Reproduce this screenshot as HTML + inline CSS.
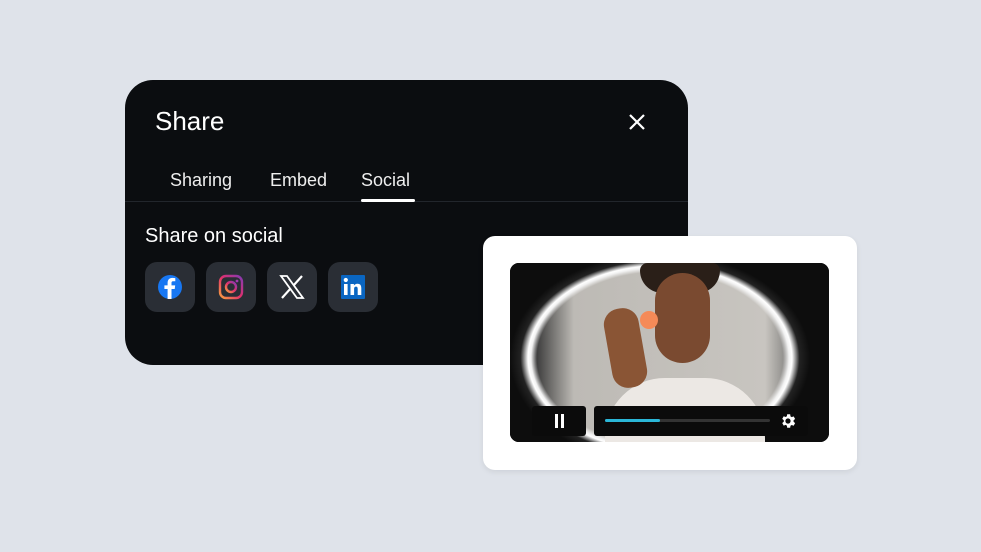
<!DOCTYPE html>
<html><head><style>
body{margin:0;width:981px;height:552px;background:#dfe3ea;position:relative;overflow:hidden;font-family:"Liberation Sans",sans-serif}
.card{position:absolute;left:125px;top:80px;width:563px;height:285px;background:#0b0d10;border-radius:28px;color:#fff}
.t{position:absolute;font-size:26px;left:30px;top:26px}
.tab{position:absolute;top:90px;font-size:18px;color:#eee}
.line{position:absolute;left:0;right:0;top:121px;height:1px;background:#22262c}
.ul{position:absolute;left:236px;top:119px;width:54px;height:3px;background:#fff;border-radius:2px}
.ic{position:absolute;top:182px;width:50px;height:50px;border-radius:12px;background:#2a2e35}
.vc{position:absolute;left:483px;top:236px;width:374px;height:234px;background:#fff;border-radius:12px;box-shadow:0 2px 6px rgba(0,0,0,.08)}
.vid{position:absolute;left:27px;top:27px;width:319px;height:179px;border-radius:9px;overflow:hidden;background:#1a1a1a}
</style></head><body>
<div class="card">
<div class="t">Share</div>
<svg style="position:absolute;left:503px;top:33px" width="18" height="18"><path d="M2 2L16 16M16 2L2 16" stroke="#fff" stroke-width="2.2"/></svg>
<div class="tab" style="left:45px">Sharing</div>
<div class="tab" style="left:145px">Embed</div>
<div class="tab" style="left:236px">Social</div>
<div class="line"></div><div class="ul"></div>
<div style="position:absolute;left:20px;top:145px;font-size:20px">Share on social</div>
<div class="ic" style="left:20px"><svg width="50" height="50"><circle cx="25" cy="25" r="12" fill="#1877f2"/><path d="M26.5 37V27h3.2l.5-3.6h-3.7v-2.3c0-1 .3-1.8 1.8-1.8h2v-3.2a25 25 0 0 0-2.9-.2c-2.9 0-4.8 1.8-4.8 5v2.5h-3.2V27h3.2v10z" fill="#fff"/></svg></div>
<div class="ic" style="left:81px"><svg width="50" height="50"><defs><linearGradient id="g" x1="0" y1="1" x2="1" y2="0"><stop offset="0" stop-color="#f9a03f"/><stop offset=".5" stop-color="#e1306c"/><stop offset="1" stop-color="#833ab4"/></linearGradient></defs><rect x="14" y="14" width="22" height="22" rx="6" fill="none" stroke="url(#g)" stroke-width="2.4"/><circle cx="25" cy="25" r="5" fill="none" stroke="url(#g)" stroke-width="2.4"/><circle cx="31" cy="19" r="1.4" fill="#a53ab0"/></svg></div>
<div class="ic" style="left:142px"><svg width="50" height="50"><path d="M14 14h6l16 22h-6z" fill="none" stroke="#fff" stroke-width="1.8"/><path d="M35 14L26.5 23.5M15 36l8.7-9.7" stroke="#fff" stroke-width="2.2"/></svg></div>
<div class="ic" style="left:203px"><svg width="50" height="50"><rect x="13" y="13" width="24" height="24" rx="1" fill="#0a66c2"/><rect x="16" y="22" width="3.6" height="11" fill="#fff"/><circle cx="17.8" cy="18" r="2.1" fill="#fff"/><path d="M22.5 22h3.4v1.6c.6-1 1.8-1.9 3.6-1.9 3 0 3.8 1.9 3.8 4.6V33h-3.6v-6c0-1.3-.3-2.4-1.7-2.4s-1.9 1-1.9 2.4v6h-3.6z" fill="#fff"/></svg></div>
</div>
<div class="vc"><div class="vid">
<div style="position:absolute;left:0;top:0;right:0;bottom:0;background:linear-gradient(90deg,#1a1a1a 0%,#3a3a3a 8%,#bdbab5 20%,#c8c5c0 80%,#5a5a5a 92%,#2a2a2a 100%)"></div>
<div style="position:absolute;left:0;top:0;right:0;bottom:0;background:radial-gradient(ellipse 150px 105px at 150px 95px,rgba(0,0,0,0) 0%,rgba(0,0,0,0) 82%,#f2f2f2 86%,#ffffff 88%,#222 93%,#0d0d0d 100%)"></div>
<div style="position:absolute;left:130px;top:0;width:80px;height:30px;border-radius:10px 10px 30px 30px;background:#2a1f18"></div>
<div style="position:absolute;left:145px;top:10px;width:55px;height:90px;border-radius:28px;background:#7a4a30"></div>
<div style="position:absolute;left:95px;top:115px;width:160px;height:80px;border-radius:60px 60px 0 0;background:#ece8e4"></div>
<div style="position:absolute;left:98px;top:45px;width:35px;height:80px;border-radius:16px;background:#8a5535;transform:rotate(-10deg)"></div>
<div style="position:absolute;left:130px;top:48px;width:18px;height:18px;border-radius:50%;background:#f58a58"></div>
<div style="position:absolute;left:22px;top:143px;width:54px;height:30px;border-radius:3px;background:#0b0b0b"></div>
<div style="position:absolute;left:45px;top:151px;width:3px;height:14px;background:#fff"></div>
<div style="position:absolute;left:51px;top:151px;width:3px;height:14px;background:#fff"></div>
<div style="position:absolute;left:84px;top:143px;width:214px;height:30px;border-radius:3px;background:#0b0b0b"></div>
<div style="position:absolute;left:95px;top:156px;width:165px;height:3px;background:#333;border-radius:2px"></div>
<div style="position:absolute;left:95px;top:156px;width:55px;height:3px;background:#2bb7d8;border-radius:2px"></div>
<svg style="position:absolute;left:269px;top:149px" width="18" height="18" viewBox="0 0 24 24"><path fill="#fff" d="M19.4 13a7.5 7.5 0 0 0 0-2l2.1-1.6-2-3.5-2.5 1a7 7 0 0 0-1.7-1L14.9 3h-4l-.4 2.7a7 7 0 0 0-1.7 1l-2.5-1-2 3.5L6.4 11a7.5 7.5 0 0 0 0 2l-2.1 1.6 2 3.5 2.5-1a7 7 0 0 0 1.7 1l.4 2.9h4l.4-2.7a7 7 0 0 0 1.7-1l2.5 1 2-3.5zM12 15.5a3.5 3.5 0 1 1 0-7 3.5 3.5 0 0 1 0 7z"/></svg>
</div></div>
</body></html>
